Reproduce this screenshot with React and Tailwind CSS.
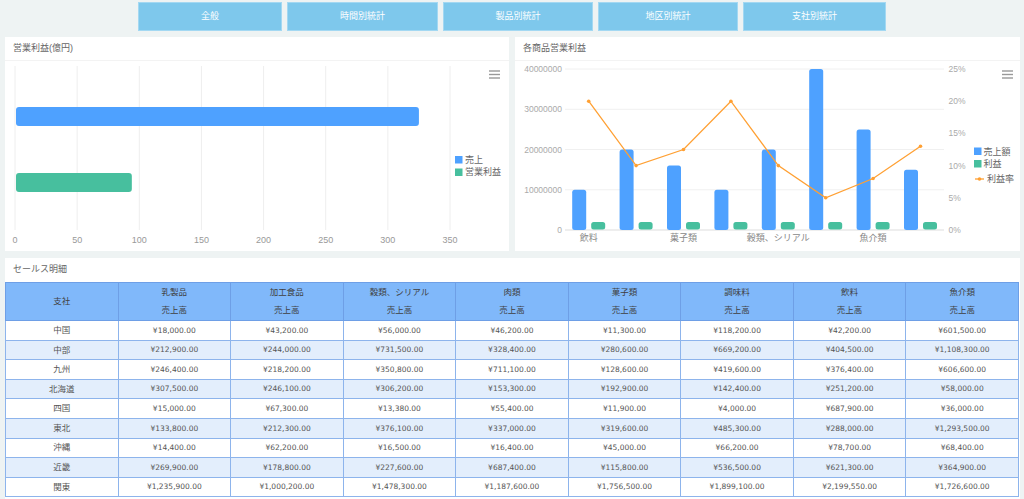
import React from 'react';

const NAV = [
  { label: '全般', w: 'w-[144px]' },
  { label: '時間別統計', w: 'w-[151px]' },
  { label: '製品別統計', w: 'w-[150px]' },
  { label: '地区別統計', w: 'w-[140px]' },
  { label: '支社別統計', w: 'w-[143px]' },
];

const CATEGORIES = ['乳製品', '加工食品', '穀類、シリアル', '肉類', '菓子類', '調味料', '飲料', '魚介類'];

const ROWS = [
  ['中国', '18,000.00', '43,200.00', '56,000.00', '46,200.00', '11,300.00', '118,200.00', '42,200.00', '601,500.00'],
  ['中部', '212,900.00', '244,000.00', '731,500.00', '328,400.00', '280,600.00', '669,200.00', '404,500.00', '1,108,300.00'],
  ['九州', '246,400.00', '218,200.00', '350,800.00', '711,100.00', '128,600.00', '419,600.00', '376,400.00', '606,600.00'],
  ['北海道', '307,500.00', '246,100.00', '306,200.00', '153,300.00', '192,900.00', '142,400.00', '251,200.00', '58,000.00'],
  ['四国', '15,000.00', '67,300.00', '13,380.00', '55,400.00', '11,900.00', '4,000.00', '687,900.00', '36,000.00'],
  ['東北', '133,800.00', '212,300.00', '376,100.00', '337,000.00', '319,600.00', '485,300.00', '288,000.00', '1,293,500.00'],
  ['沖縄', '14,400.00', '62,200.00', '16,500.00', '16,400.00', '45,000.00', '66,200.00', '78,700.00', '68,400.00'],
  ['近畿', '269,900.00', '178,800.00', '227,600.00', '687,400.00', '115,800.00', '536,500.00', '621,300.00', '364,900.00'],
  ['関東', '1,235,900.00', '1,000,200.00', '1,478,300.00', '1,187,600.00', '1,756,500.00', '1,899,100.00', '2,199,550.00', '1,726,600.00'],
];

// right chart data
const SALES = [10, 20, 16, 10, 20, 40, 25, 15]; // 百万
const RATE = [20, 10, 12.5, 20, 10, 5, 8, 13];

function Menu({ x }) {
  return (
    <g stroke="#999" strokeWidth="1.4">
      <line x1={x} x2={x + 11} y1="71" y2="71" />
      <line x1={x} x2={x + 11} y1="74.5" y2="74.5" />
      <line x1={x} x2={x + 11} y1="78" y2="78" />
    </g>
  );
}

function ProfitChart() {
  const ticks = [0, 50, 100, 150, 200, 250, 300, 350];
  const px = (v) => 15 + (v / 350) * 435;
  return (
    <svg width="504" height="190" viewBox="5 61 504 190">
      {ticks.map((t) => (
        <g key={t}>
          <line x1={px(t)} x2={px(t)} y1="66" y2="230" stroke="#eeeeee" />
          <text x={px(t)} y="243" textAnchor="middle" fontSize="9" fill="#999">{t}</text>
        </g>
      ))}
      <rect x="16" y="107" width={px(325) - 16} height="19" rx="3" fill="#4ea1ff" />
      <rect x="16" y="173" width={px(94) - 16} height="19" rx="3" fill="#47bf9e" />
      <rect x="455" y="156" width="7.5" height="7.5" fill="#4ea1ff" />
      <text x="465" y="162.5" fontSize="9" fill="#666">売上</text>
      <rect x="455" y="168.5" width="7.5" height="7.5" fill="#47bf9e" />
      <text x="465" y="175" fontSize="9" fill="#666">営業利益</text>
      <Menu x={489} />
    </svg>
  );
}

function ProductChart() {
  const left = 565;
  const step = 47.4;
  const y = (m) => 230 - (m / 40) * 161;
  const yr = (p) => 230 - (p / 25) * 161;
  const cx = (i) => left + step * (i + 0.5);
  const pts = RATE.map((r, i) => `${cx(i)},${yr(r)}`).join(' ');
  return (
    <svg width="505" height="190" viewBox="515 61 505 190">
      {[0, 10, 20, 30, 40].map((m) => (
        <g key={m}>
          <line x1={left} x2="944" y1={y(m)} y2={y(m)} stroke={m === 0 ? '#dddddd' : '#f0f0f0'} />
          <text x="562" y={y(m) + 3} textAnchor="end" fontSize="8.5" fill="#aaa">{m === 0 ? '0' : `${m}000000`}</text>
        </g>
      ))}
      {[0, 5, 10, 15, 20, 25].map((p) => (
        <text key={p} x="948.5" y={yr(p) + 3} fontSize="8.5" fill="#aaa">{p}%</text>
      ))}
      {SALES.map((s, i) => (
        <g key={i}>
          <rect x={cx(i) - 16.5} y={y(s)} width="14" height={230 - y(s)} rx="2.5" fill="#4ea1ff" />
          <rect x={cx(i) + 2.5} y="222" width="14" height="7.5" rx="2.5" fill="#47bf9e" />
        </g>
      ))}
      <polyline points={pts} fill="none" stroke="#ffa033" strokeWidth="1.3" />
      {RATE.map((r, i) => (
        <circle key={i} cx={cx(i)} cy={yr(r)} r="1.8" fill="#ffa033" />
      ))}
      <text x={cx(0)} y="241" textAnchor="middle" fontSize="9" fill="#888">飲料</text>
      <text x={cx(2)} y="241" textAnchor="middle" fontSize="9" fill="#888">菓子類</text>
      <text x={cx(4)} y="241" textAnchor="middle" fontSize="9" fill="#888">穀類、シリアル</text>
      <text x={cx(6)} y="241" textAnchor="middle" fontSize="9" fill="#888">魚介類</text>
      <rect x="974" y="147.5" width="7.5" height="7.5" fill="#4ea1ff" />
      <text x="983.5" y="154.5" fontSize="9" fill="#666">売上額</text>
      <rect x="974" y="160" width="7.5" height="7.5" fill="#47bf9e" />
      <text x="983.5" y="167" fontSize="9" fill="#666">利益</text>
      <line x1="975" x2="984" y1="179" y2="179" stroke="#ffa033" strokeWidth="1.3" />
      <circle cx="979.5" cy="179" r="1.8" fill="#ffa033" />
      <text x="987" y="182" fontSize="9" fill="#666">利益率</text>
      <Menu x={1002} />
    </svg>
  );
}

function Panel({ title, children }) {
  return (
    <div className="h-full bg-white flex flex-col overflow-hidden">
      <div className="h-[24px] shrink-0 border-b border-[#f3f3f3] pl-[8px] flex items-center text-[9px] text-[#666]">{title}</div>
      {children}
    </div>
  );
}

export default function App() {
  return (
    <div className="w-[1024px] h-[499px] overflow-hidden bg-[#eef3f3] font-['Liberation_Sans','Noto_Sans_CJK_JP',sans-serif]">
      <div className="flex justify-center gap-[5px] pt-[2px]">
        {NAV.map((n) => (
          <button key={n.label} className={`${n.w} h-[29px] bg-[#7ec8ec] border border-[#a3d8f2] text-white text-[9px]`}>{n.label}</button>
        ))}
      </div>

      <div className="flex gap-[6px] pl-[5px] mt-[6px] h-[214px]">
        <div className="w-[504px]">
          <Panel title="営業利益(億円)">
            <ProfitChart />
          </Panel>
        </div>
        <div className="w-[505px]">
          <Panel title="各商品営業利益">
            <ProductChart />
          </Panel>
        </div>
      </div>

      <div className="ml-[5px] w-[1015px] mt-[7px] h-[245px] bg-white overflow-hidden">
        <div className="h-[24px] pl-[8px] flex items-center text-[9px] text-[#666]">セールス明細</div>
        <table className="w-[1014px] table-fixed border-collapse text-center text-[#555]">
          <thead className="bg-[#80b8fa] text-[8.5px] text-[#3f3f3f]">
            <tr className="h-[19px]">
              <th rowSpan={2} className="font-normal border border-[#6e9fe6]">支社</th>
              {CATEGORIES.map((c) => (
                <th key={c} className="font-normal border-x border-t border-[#6e9fe6]">{c}</th>
              ))}
            </tr>
            <tr className="h-[19px]">
              {CATEGORIES.map((c) => (
                <th key={c} className="font-normal border-x border-b border-[#6e9fe6]">売上高</th>
              ))}
            </tr>
          </thead>
          <tbody>
            {ROWS.map((r, i) => (
              <tr key={r[0]} className={`h-[19.6px] ${i % 2 === 1 ? 'bg-[#e3eefc]' : 'bg-white'}`}>
                <td className="border border-[#8db4ec] text-[8.5px]">{r[0]}</td>
                {r.slice(1).map((v, j) => (
                  <td key={j} className="border border-[#8db4ec] text-[7.5px] font-['DejaVu_Sans',sans-serif]">¥{v}</td>
                ))}
              </tr>
            ))}
          </tbody>
        </table>
      </div>
    </div>
  );
}
